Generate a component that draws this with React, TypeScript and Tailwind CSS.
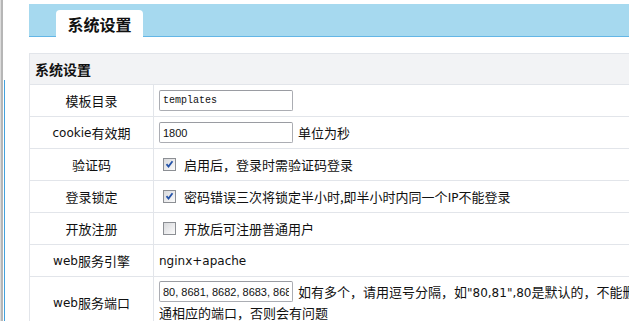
import React from "react";

const cjk = { fontFamily: '"Noto Sans CJK SC", "Noto Sans", sans-serif' };
const lat = "text-[12px] font-['DejaVu_Sans',sans-serif]";

function L({ children }: { children: React.ReactNode }) {
  return <span className={lat}>{children}</span>;
}

function Check({ checked }: { checked: boolean }) {
  return (
    <span className="ml-[4px] mr-[8px] inline-flex h-[13px] w-[13px] shrink-0 items-center justify-center border border-[#8c8f94] bg-gradient-to-br from-[#d8d9dc] to-[#fbfbfb]">
      {checked && (
        <svg width="9" height="9" viewBox="0 0 9 9">
          <path d="M1.5 4.2 L3.5 6.5 L7.5 1.2" fill="none" stroke="#2352a8" strokeWidth="1.8" />
        </svg>
      )}
    </span>
  );
}

function Row({ label, children, tall }: { label: React.ReactNode; children: React.ReactNode; tall?: boolean }) {
  return (
    <div className={`flex border-b border-[#e2e5ea] ${tall ? "" : "h-[32px]"}`}>
      <div className="flex w-[124px] shrink-0 items-center justify-center border-r border-[#e2e5ea] text-[13px] text-[#111]">
        {label}
      </div>
      <div className={`flex-1 pl-[5px] text-[13px] text-[#111] ${tall ? "pt-[4px] pb-[6px]" : "flex items-center"}`}>
        {children}
      </div>
    </div>
  );
}

const inputCls =
  "h-[21px] w-[134px] shrink-0 rounded-[2px] border border-[#abadb3] border-t-[#9a9ca2] bg-white px-[3px] text-[#111] outline-none";

export default function App() {
  return (
    <div className="relative flex h-[321px] w-[629px] overflow-hidden bg-white" style={cjk}>
      {/* left frame strip */}
      <div className="flex h-full shrink-0">
        <div className="h-full w-[1px] bg-[#dcdcdc]" />
        <div className="h-full w-[2px] bg-[#b6b6b6]" />
        <div className="h-full w-[1px] bg-white" />
        <div className="flex h-full w-[1px] flex-col">
          <div className="h-[80px] bg-white" />
          <div className="flex-1 bg-[#43a1dc]" />
        </div>
      </div>

      <div className="min-w-0 flex-1 pl-[24px] pt-[4px]">
        {/* header band */}
        <div className="flex h-[33px] w-[640px] items-end border-b border-[#63b6e6] bg-[#a6d9ef]">
          <div className="mb-[-1px] ml-[27px] flex h-[27px] w-[87px] items-center justify-center rounded-t-[4px] bg-white text-[16px] font-bold text-[#111]">
            系统设置
          </div>
        </div>

        {/* table */}
        <div className="mt-[16px] w-[640px] border-l border-t border-[#e2e5ea]">
          <div className="flex h-[31px] items-center border-b border-[#e2e5ea] bg-[#f2f3f5] pl-[5px] text-[14px] font-bold text-[#111]">
            系统设置
          </div>

          <Row label="模板目录">
            <input
              readOnly
              value="templates"
              className={`${inputCls} font-['Liberation_Mono',monospace] text-[10px]`}
            />
          </Row>

          <Row label={<><L>cookie</L>有效期</>}>
            <input
              readOnly
              value="1800"
              className={`${inputCls} font-['Liberation_Sans',sans-serif] text-[11px]`}
            />
            <span className="ml-[5px]">单位为秒</span>
          </Row>

          <Row label="验证码">
            <Check checked />
            <span>启用后，登录时需验证码登录</span>
          </Row>

          <Row label="登录锁定">
            <Check checked />
            <span>
              密码错误三次将锁定半小时,即半小时内同一个<L>IP</L>不能登录
            </span>
          </Row>

          <Row label="开放注册">
            <Check checked={false} />
            <span>开放后可注册普通用户</span>
          </Row>

          <Row label={<><L>web</L>服务引擎</>}>
            <L>nginx+apache</L>
          </Row>

          <Row tall label={<><L>web</L>服务端口</>}>
            <div className="flex h-[21px] items-center whitespace-nowrap">
              <input
                readOnly
                value="80, 8681, 8682, 8683, 8684, 8685"
                className={`${inputCls} font-['Liberation_Sans',sans-serif] text-[11px]`}
              />
              <span className="ml-[5px]">
                如有多个，请用逗号分隔，如<L>"80,81",80</L>是默认的，不能删除，并需在防火墙开
              </span>
            </div>
            <div className="h-[20px] leading-[20px] mt-[1px]">通相应的端口，否则会有问题</div>
          </Row>
        </div>
      </div>
    </div>
  );
}
